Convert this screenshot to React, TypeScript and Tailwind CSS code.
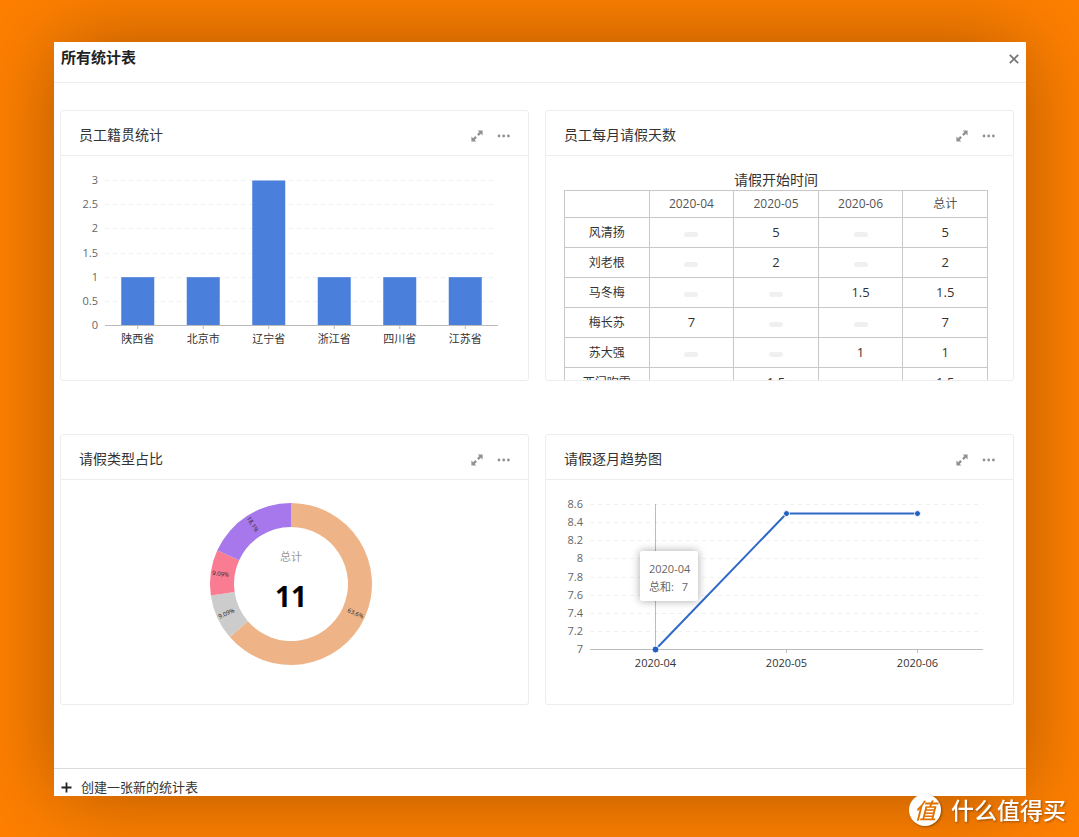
import type { ReactNode } from 'react';

const provinces = [
  { name: '陕西省', value: 1 },
  { name: '北京市', value: 1 },
  { name: '辽宁省', value: 3 },
  { name: '浙江省', value: 1 },
  { name: '四川省', value: 1 },
  { name: '江苏省', value: 1 },
];

const months = ['2020-04', '2020-05', '2020-06'];

const leaveRows = [
  { name: '风清扬', days: ['', '5', ''], total: '5' },
  { name: '刘老根', days: ['', '2', ''], total: '2' },
  { name: '马冬梅', days: ['', '', '1.5'], total: '1.5' },
  { name: '梅长苏', days: ['7', '', ''], total: '7' },
  { name: '苏大强', days: ['', '', '1'], total: '1' },
  { name: '西门吹雪', days: ['', '1.5', ''], total: '1.5' },
];

const leaveTypes = [
  { value: 7, label: '63.6%', color: '#eeb487' },
  { value: 1, label: '9.09%', color: '#cccccc' },
  { value: 1, label: '9.09%', color: '#f97c92' },
  { value: 2, label: '18.1%', color: '#a678ec' },
];

const trend = [7, 8.5, 8.5];

// Plot area shared by the bar and line charts
const LEFT = 44;
const RIGHT = 437;
const TOP = 24;
const BOTTOM = 169;

const ExpandIcon = () => (
  <svg className="w-3 h-3" viewBox="0 0 12 12" fill="currentColor">
    <path d="M6.6 0.4H11.6V5.4L9.9 3.7L7.7 5.9L6.1 4.3L8.3 2.1Z" />
    <path d="M5.4 11.6H0.4V6.6L2.1 8.3L4.3 6.1L5.9 7.7L3.7 9.9Z" />
  </svg>
);

const MoreIcon = () => (
  <svg className="w-[14px] h-3" viewBox="0 0 14 12" fill="currentColor">
    <circle cx="2" cy="6" r="1.4" />
    <circle cx="6.7" cy="6" r="1.4" />
    <circle cx="11.4" cy="6" r="1.4" />
  </svg>
);

const ChartCard = ({ title, children }: { title: string; children: ReactNode }) => (
  <section className="min-w-0 rounded-[3px] border border-[#ededed] bg-white">
    <header className="flex h-[45px] items-center justify-between border-b border-[#ededed] pt-1 pr-[17px] pl-[18px]">
      <h2 className="text-sm leading-5 text-[#333]">{title}</h2>
      <div className="flex items-center gap-[14px] pt-[2px] text-[#919191]">
        <button type="button" aria-label="放大" className="cursor-pointer">
          <ExpandIcon />
        </button>
        <button type="button" aria-label="更多" className="cursor-pointer">
          <MoreIcon />
        </button>
      </div>
    </header>
    <div className="h-56 overflow-hidden">{children}</div>
  </section>
);

const GridLines = ({ ticks }: { ticks: string[] }) => {
  const step = (BOTTOM - TOP) / (ticks.length - 1);
  return (
    <>
      {ticks.map((tick, i) => {
        const y = Math.round(BOTTOM - i * step) + 0.5;
        return (
          <g key={tick}>
            <text x="37" y={y + 3} textAnchor="end" fill="#666">
              {tick}
            </text>
            {i > 0 && (
              <line x1={LEFT} x2={RIGHT} y1={y} y2={y} stroke="#f0f0f0" strokeDasharray="4 4" />
            )}
          </g>
        );
      })}
    </>
  );
};

const BarChart = () => {
  const band = (RIGHT - LEFT) / provinces.length;
  return (
    <svg className="h-full w-full text-[11px]" viewBox="0 0 467 224">
      <GridLines ticks={['0', '0.5', '1', '1.5', '2', '2.5', '3']} />
      {provinces.map((p, i) => {
        const x = LEFT + band * (i + 0.5);
        const height = ((BOTTOM - TOP) * p.value) / 3;
        return (
          <g key={p.name}>
            <rect x={x - 16.5} y={BOTTOM - height + 0.5} width="33" height={height} fill="#4a7fdb" />
            <line x1={x} x2={x} y1={BOTTOM} y2={BOTTOM + 4} stroke="#bbb" />
            <text x={x} y="187" textAnchor="middle" fill="#333">
              {p.name}
            </text>
          </g>
        );
      })}
      <line x1={LEFT} x2={RIGHT} y1={BOTTOM + 0.5} y2={BOTTOM + 0.5} stroke="#bbb" />
    </svg>
  );
};

const LeaveTable = () => (
  <div className="pt-[14px] pr-[25px] pl-[18px]">
    <table className="w-full table-fixed border-collapse text-center text-xs text-[#333]">
      <caption className="text-sm leading-5">请假开始时间</caption>
      <thead>
        <tr className="h-[27px]">
          <th className="border border-[#c8c8c8]" />
          {months.map((m) => (
            <th key={m} scope="col" className="border border-[#c8c8c8] font-normal text-[#555]">
              {m}
            </th>
          ))}
          <th scope="col" className="border border-[#c8c8c8] font-normal text-[#555]">
            总计
          </th>
        </tr>
      </thead>
      <tbody>
        {leaveRows.map((row) => (
          <tr key={row.name} className="h-[30px]">
            <th scope="row" className="border border-[#c8c8c8] font-normal">
              {row.name}
            </th>
            {row.days.map((d, i) => (
              <td key={i} className="border border-[#c8c8c8] text-[13px]">
                {d || <div className="mx-auto mt-1 h-[5px] w-[14px] rounded-sm bg-[#f0f0f0]" />}
              </td>
            ))}
            <td className="border border-[#c8c8c8] text-[13px]">{row.total}</td>
          </tr>
        ))}
      </tbody>
    </table>
  </div>
);

const DonutChart = () => {
  const total = leaveTypes.reduce((sum, t) => sum + t.value, 0);
  const outer = 81;
  const inner = 57;
  let start = 0;

  const point = (angle: number, r: number) => `${r * Math.sin(angle)} ${-r * Math.cos(angle)}`;

  return (
    <svg className="h-full w-full" viewBox="0 0 467 224">
      <g transform="translate(230 104)">
        {leaveTypes.map((t, i) => {
          const from = start;
          const to = start + (t.value / total) * Math.PI * 2;
          start = to;
          const mid = (from + to) / 2;
          const large = to - from > Math.PI ? 1 : 0;
          const degrees = (mid * 180) / Math.PI;
          // Labels on the left half are turned round so that they stay readable
          const rotation = degrees > 180 ? degrees - 270 : degrees - 90;
          return (
            <g key={i}>
              <path
                d={`M${point(from, outer)} A${outer} ${outer} 0 ${large} 1 ${point(to, outer)} L${point(to, inner)} A${inner} ${inner} 0 ${large} 0 ${point(from, inner)}Z`}
                fill={t.color}
              />
              <text
                transform={`translate(${point(mid, 71)}) rotate(${rotation})`}
                y="2"
                textAnchor="middle"
                fill="#222"
                className="text-[6px] font-medium"
              >
                {t.label}
              </text>
            </g>
          );
        })}
        <text y="-23" textAnchor="middle" fill="#999" className="text-[11px]">
          总计
        </text>
        <text y="23" textAnchor="middle" fill="#000" className="text-[28px] font-bold">
          {total}
        </text>
      </g>
    </svg>
  );
};

const LineChart = () => {
  const band = (RIGHT - LEFT) / months.length;
  const points = trend.map((v, i) => ({
    x: LEFT + band * (i + 0.5),
    y: BOTTOM + 0.5 - ((v - 7) / 1.6) * (BOTTOM - TOP),
  }));

  return (
    <svg className="h-full w-full text-[11px]" viewBox="0 0 467 224">
      <GridLines ticks={['7', '7.2', '7.4', '7.6', '7.8', '8', '8.2', '8.4', '8.6']} />
      <line x1={LEFT} x2={RIGHT} y1={BOTTOM + 0.5} y2={BOTTOM + 0.5} stroke="#bbb" />
      <line x1={points[0].x} x2={points[0].x} y1={TOP} y2={BOTTOM} stroke="#bbb" />
      {months.map((m, i) => (
        <g key={m}>
          <line x1={points[i].x} x2={points[i].x} y1={BOTTOM} y2={BOTTOM + 4} stroke="#bbb" />
          <text x={points[i].x} y="187" textAnchor="middle" fill="#333">
            {m}
          </text>
        </g>
      ))}
      <polyline
        points={points.map((p) => `${p.x},${p.y}`).join(' ')}
        fill="none"
        stroke="#2f69c8"
        strokeWidth="2"
      />
      {points.map((p, i) => (
        <circle key={i} cx={p.x} cy={p.y} r={i === 0 ? 3.5 : 3} fill="#2060c4" stroke="#fff" />
      ))}
      <g fill="#666">
        <rect
          x="94"
          y="71"
          width="58"
          height="50"
          rx="2"
          fill="#fff"
          className="drop-shadow-[0_0_4px_rgba(0,0,0,0.35)]"
        />
        <text x="103" y="93">2020-04</text>
        <text x="103" y="111">总和:</text>
        <text x="142" y="111" textAnchor="end">7</text>
      </g>
    </svg>
  );
};

export default function App() {
  return (
    <div className="relative flex min-h-screen flex-col overflow-hidden bg-[#ff8000] pt-[42px] pr-[53px] pb-[41px] pl-[54px] font-['Open_Sans','Noto_Sans_CJK_SC',sans-serif]">
      <div className="flex flex-1 flex-col bg-white shadow-[0_0_80px_rgba(0,0,0,0.32)]">
        <header className="flex h-[41px] items-start justify-between border-b border-[#ededed] pt-[5px] pr-[6px] pl-[7px]">
          <h1 className="text-[15px] leading-5 font-bold text-[#222]">所有统计表</h1>
          <button type="button" aria-label="关闭" className="mt-[6px] cursor-pointer text-[#777]">
            <svg className="h-3 w-3" viewBox="0 0 12 12" stroke="currentColor" strokeWidth="1.8">
              <path d="M1.8 1.8L10.2 10.2M10.2 1.8L1.8 10.2" />
            </svg>
          </button>
        </header>

        <main className="grid flex-1 grid-cols-2 content-start gap-x-4 gap-y-[53px] pt-[27px] pr-3 pb-8 pl-[6px]">
          <ChartCard title="员工籍贯统计">
            <BarChart />
          </ChartCard>
          <ChartCard title="员工每月请假天数">
            <LeaveTable />
          </ChartCard>
          <ChartCard title="请假类型占比">
            <DonutChart />
          </ChartCard>
          <ChartCard title="请假逐月趋势图">
            <LineChart />
          </ChartCard>
        </main>

        <footer className="h-7 overflow-hidden border-t border-[#dcdcdc] pt-2 pl-[7px]">
          <button type="button" className="flex cursor-pointer items-center gap-[9px] text-[13px] leading-5 text-[#333]">
            <svg className="h-[11px] w-[11px]" viewBox="0 0 11 11" stroke="#222" strokeWidth="1.8">
              <path d="M5.5 0.5V10.5M0.5 5.5H10.5" />
            </svg>
            创建一张新的统计表
          </button>
        </footer>
      </div>

      {/* Site mark */}
      <div className="absolute right-[13px] bottom-[11px] flex items-center gap-[10px] text-white drop-shadow-[1px_1px_1px_rgba(0,0,0,0.35)]">
        <span className="flex h-8 w-8 items-center justify-center rounded-full bg-white text-[22px] leading-8 font-medium text-[#df7200] italic">
          值
        </span>
        <span className="text-[23px] leading-8 font-medium">什么值得买</span>
      </div>
    </div>
  );
}
